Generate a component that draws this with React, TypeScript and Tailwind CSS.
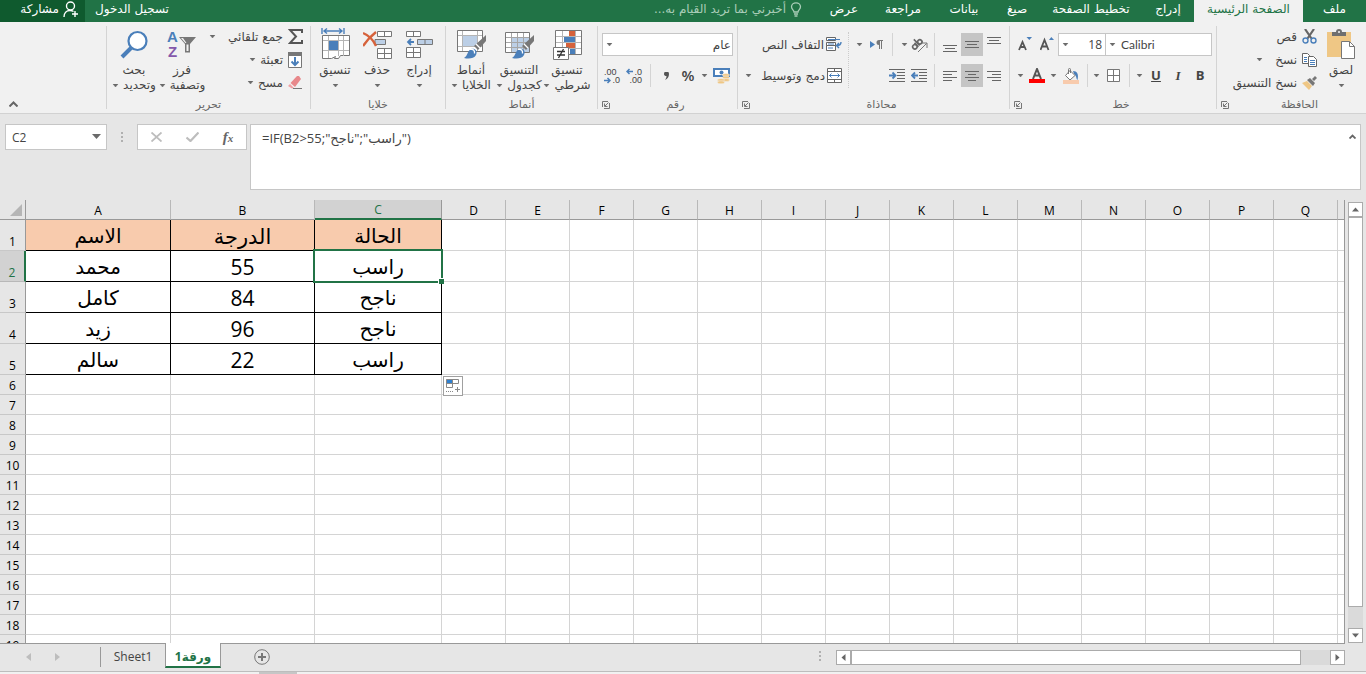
import React, { ReactNode } from 'react';
import clsx from 'clsx';

/* ---------- Small shared pieces ---------- */

const Caret = ({ className = '' }: { className?: string }) => (
  <svg width="7" height="4" viewBox="0 0 7 4" className={clsx('shrink-0', className)} fill="#6a6a6a">
    <path d="M1 0h5L3.5 3z" stroke="#6a6a6a" strokeWidth="0.5" />
  </svg>
);

const Launcher = () => (
  <button aria-label="launcher" className="flex w-4 items-center justify-center">
    <svg width="8" height="8" viewBox="0 0 8 8" fill="none" stroke="#777">
      <path d="M0.5 6V0.5H6M7.5 2v5.500H2M6.500 1.500L3 5M2.500 2.500v3H5.500" />
    </svg>
  </button>
);

const Sep = ({ className }: { className: string }) => (
  <span className={clsx('flex h-full shrink-0 justify-center', className)}>
    <span className="h-full w-px bg-[#d4d4d4]" />
  </span>
);

interface IconButtonProps {
  className: string;
  label: string;
  active?: boolean;
  children: ReactNode;
}

const IconButton = ({ className, label, active, children }: IconButtonProps) => (
  <button
    aria-label={label}
    className={clsx('flex h-full shrink-0 items-center justify-center', className, active && 'bg-[#c5c5c5]')}
  >
    {children}
  </button>
);

interface GroupProps {
  title: string;
  className: string;
  launcher?: boolean;
  children: ReactNode;
}

const Group = ({ title, className, launcher, children }: GroupProps) => (
  <section className={clsx('flex shrink-0 flex-col border-l border-[#d4d4d4]', className)}>
    <div className="flex min-h-0 flex-1 items-start">{children}</div>
    <div className="flex h-2 shrink-0 items-center">
      <span className="flex-1 text-center text-[11px] leading-4 text-[#666]">{title}</span>
      {launcher && <Launcher />}
    </div>
  </section>
);

interface BigButtonProps {
  icon: ReactNode;
  line1: string;
  line2?: string;
  className: string;
}

const BigButton = ({ icon, line1, line2, className }: BigButtonProps) => (
  <button className={clsx('flex shrink-0 flex-col items-center pt-0.5 leading-[15px]', className)}>
    <span className="flex h-8 items-center">{icon}</span>
    <span className="mt-[3px] whitespace-nowrap">{line1}</span>
    <span className="flex h-[15px] items-center gap-1 whitespace-nowrap">
      {line2}
      <Caret />
    </span>
  </button>
);

interface SmallButtonProps {
  icon: ReactNode;
  text: string;
  caret?: boolean;
  wide?: boolean;
}

const SmallButton = ({ icon, text, caret, wide }: SmallButtonProps) => (
  <button className="flex h-[23px] items-center gap-1 pb-0.5 whitespace-nowrap">
    <span className="flex w-4 justify-center">{icon}</span>
    {text}
    {caret && <Caret className={wide ? 'ms-2' : ''} />}
  </button>
);

/* ---------- Icons ---------- */

const PasteIcon = () => (
  <svg width="28" height="31" viewBox="0 0 28 31">
    <path fill="#efc785" d="M0 3h24v25H0z" />
    <path fill="#6f6f6f" d="M5 3h4a3 3 0 0 1 6 0h4v4H5z" />
    <circle cx="12" cy="3" r="1" fill="#f1f1f1" />
    <path fill="#fff" stroke="#777" d="M14.500 12.500h8l5 5v12h-13z" />
    <path fill="none" stroke="#777" d="M22.500 12.500v5h5" />
  </svg>
);

const CutIcon = () => (
  <svg width="15" height="15" viewBox="0 0 15 15" fill="none">
    <path stroke="#666" strokeWidth="2.200" d="M3 0l6.500 9.500M12 0L5.500 9.500" />
    <circle cx="3.500" cy="11.500" r="2.500" stroke="#4a7fba" strokeWidth="1.400" />
    <circle cx="11.500" cy="11.500" r="2.500" stroke="#4a7fba" strokeWidth="1.400" />
  </svg>
);

const CopyIcon = () => (
  <svg width="15" height="14" viewBox="0 0 15 14" fill="#fff" stroke="#666">
    <path d="M0.500 0.500h5l2 2v8h-7z" />
    <path stroke="#4a7fba" d="M2 4.500h3M2 6.500h3M2 8.500h3" />
    <path d="M6.500 3.500h5l3 3v7h-8z" />
    <path stroke="#4a7fba" d="M8 7.500h5M8 9.500h5M8 11.500h5" />
  </svg>
);

const PainterIcon = () => (
  <svg width="15" height="14" viewBox="0 0 15 14">
    <path fill="#efc785" d="M0 7l5-2 5 5-3 4z" />
    <path fill="#777" d="M5 4l3-2 5 5-2 3zM10 3l3-3 2 2-3 3z" />
  </svg>
);

const BordersIcon = () => (
  <svg width="13" height="13" viewBox="0 0 13 13" fill="#fff" stroke="#777">
    <path d="M0.500 0.500h12v12h-12zM6.500 0v13M0 6.500h13" />
  </svg>
);

const FillIcon = () => (
  <svg width="16" height="16" viewBox="0 0 16 16">
    <path fill="#4a7fba" d="M10 3c4 0 6 3 4.500 9C13 11 14 8 11 6z" />
    <path fill="#fff" stroke="#777" d="M7 2.500l5 5L7 12 2.500 7.500z" />
    <path fill="none" stroke="#777" d="M5.500 6V1.500a1 1 0 0 1 2 0V5" />
    <path fill="#f8cbad" d="M0 12h16v4H0z" />
  </svg>
);

// Horizontal strokes, used for both vertical and horizontal alignment
const LinesIcon = ({ d, height = 12 }: { d: string; height?: number }) => (
  <svg width="14" height={height} viewBox={`0 0 14 ${height}`} stroke="#666" fill="none">
    <path d={d} />
  </svg>
);

const VLINES = 'M0 0.500h14M2 3.500h10M0 6.500h14';

const IndentIcon = ({ flip }: { flip?: boolean }) => (
  <svg width="16" height="13" viewBox="0 0 16 13" fill="none">
    <path stroke="#666" d="M0 0.500h16M8 3.500h8M8 6.500h8M8 9.500h8M0 12.500h16" />
    {flip ? (
      <path stroke="#4a7fba" strokeWidth="1.800" d="M0 6.500h6M3.500 3.500l3 3-3 3" />
    ) : (
      <path stroke="#4a7fba" strokeWidth="1.800" d="M7 6.500H1M4 3.500l-3 3 3 3" />
    )}
  </svg>
);

const OrientationIcon = () => (
  <svg width="17" height="16" viewBox="0 0 17 16">
    <g transform="rotate(-45 6 7)" fill="none" stroke="#666" strokeWidth="1.600">
      <circle cx="2.500" cy="7.500" r="2.200" />
      <path d="M5 4.500V10M7 1.500V10" />
      <circle cx="9.500" cy="7.500" r="2.200" />
    </g>
    <path fill="none" stroke="#777" d="M7 15L15.500 6.500M11 6h5v5" />
  </svg>
);

const DirectionIcon = () => (
  <svg width="13" height="10" viewBox="0 0 13 10">
    <path fill="#4a7fba" d="M0 1l5 3.500L0 8z" />
    <path fill="#777" d="M13 0v1h-1v8h-1V1h-1v8H9V5a2.500 2.500 0 0 1 0-5z" />
  </svg>
);

const WrapIcon = () => (
  <svg width="16" height="15" viewBox="0 0 16 15" fill="#fff">
    <path stroke="#666" d="M0.500 0.500h9v3h-9zM0.500 5.500h9v3h-9zM0.500 8.500h9v5h-9z" />
    <path stroke="#4a7fba" fill="none" d="M2 2.500h12M2 7h6M2 11h5" />
    <path stroke="#4a7fba" strokeWidth="1.400" fill="none" d="M15 5c0 3-2 3.500-4 3.500M13 6l-2.500 2.500L13 11" />
  </svg>
);

const MergeIcon = () => (
  <svg width="15" height="15" viewBox="0 0 15 15" fill="#fff" stroke="#666">
    <path d="M0.500 0.500h14v14h-14zM0 3.500h15M0 11.500h15M7.500 0v3M7.500 12v3" />
    <path stroke="#4a7fba" fill="none" d="M2 7.500h11M4.500 5.500l-2 2 2 2M10.500 5.500l2 2-2 2" />
  </svg>
);

const MoneyIcon = () => (
  <svg width="17" height="17" viewBox="0 0 17 17">
    <path fill="#fff" stroke="#4a7fba" strokeWidth="2" d="M1 2h15v7H1z" />
    <circle cx="8.500" cy="5.500" r="2" fill="#4a7fba" />
    <g fill="#efc785" stroke="#f1f1f1" strokeWidth="0.500">
      <ellipse cx="13" cy="8" rx="3.500" ry="1.500" />
      <ellipse cx="13" cy="10.500" rx="3.500" ry="1.500" />
      <ellipse cx="13" cy="13" rx="3.500" ry="1.500" />
      <ellipse cx="8" cy="13" rx="3.500" ry="1.500" />
      <ellipse cx="8" cy="15.300" rx="3.500" ry="1.500" />
    </g>
  </svg>
);

const DecimalIcon = ({ less }: { less?: boolean }) => (
  <span dir="ltr" className="relative flex w-4 flex-col font-['Liberation_Sans'] text-[9px] leading-[8px] text-[#444]">
    <span className={less ? 'text-left' : 'text-right'}>{less ? '.00' : '.0'}</span>
    <span className="text-right">{less ? '.0' : '.00'}</span>
    <svg width="7" height="7" viewBox="0 0 7 7" fill="none" stroke="#4a7fba" strokeWidth="1.500" className={clsx('absolute left-0', less ? 'bottom-0' : 'top-0')}>
      <path d={less ? 'M0 3.500h6M3.500 1l2.500 2.500L3.500 6' : 'M7 3.500H1M3.500 1L1 3.500 3.500 6'} />
    </svg>
  </span>
);

const ConditionalIcon = () => (
  <svg width="31" height="31" viewBox="0 0 31 31">
    <path fill="#fff" stroke="#777" d="M3.500 1.500h26v24h-26z" />
    <path stroke="#b5b5b5" d="M10.500 2v23M23.500 2v23M4 7.500h25M4 13.500h25M4 19.500h25" />
    <path fill="#d6623b" d="M17 2h6v5h-6zM14 14h9v5h-9z" />
    <path fill="#4a7fba" d="M12 8h11v5H12zM18 20h5v5h-5z" />
    <path fill="#fff" stroke="#777" d="M1.500 18.500h15v12h-15z" />
    <path fill="none" stroke="#333" strokeWidth="1.300" d="M5 22.500h8M5 26h8M11.500 20l-5 9" />
  </svg>
);

const Brush = () => (
  <>
    <path fill="#777" d="M30 6v6l-8 9-4-4z" />
    <path fill="#4a7fba" d="M8 29c4-2 3-7 7-9 4-1 7 2 5 6-2 4-8 4-12 3z" />
    <path fill="none" stroke="#fff" strokeWidth="1.300" d="M14 20.500c3-1 5 1 4.500 4M20 15l4 4" />
  </>
);

const TableFormatIcon = () => (
  <svg width="31" height="31" viewBox="0 0 31 31">
    <path fill="#fff" stroke="#777" d="M1.500 3.500h24v20h-24z" />
    <path fill="#bccfe6" d="M8 9h17v14H8z" />
    <path stroke="#a5a5a5" d="M7.500 4v19M13.500 4v19M19.500 4v19M2 8.500h23M2 13.500h23M2 18.500h23" />
    <Brush />
  </svg>
);

const CellStylesIcon = () => (
  <svg width="31" height="31" viewBox="0 0 31 31">
    <path fill="#fff" stroke="#777" d="M1.500 1.500h25v21h-25z" />
    <path stroke="#b5b5b5" d="M6.500 2v20M21.500 2v20M2 6.500h24M2 17.500h24" />
    <path fill="#bccfe6" d="M7 7h14v10H7z" />
    <Brush />
  </svg>
);

const InsertIcon = () => (
  <svg width="27" height="29" viewBox="0 0 27 29" fill="#fff" stroke="#777">
    <path d="M0.500 1.500h14v5h-14zM7.500 1.500v5M0.500 17.500h14v10h-14zM7.500 17.500v10M0.500 22.500h14" />
    <path fill="#bccfe6" d="M11.500 9.500h15v5h-15zM19 9.500v5" />
    <path fill="none" stroke="#4a7fba" strokeWidth="1.800" d="M8 12H2M5 9l-3 3 3 3" />
  </svg>
);

const DeleteIcon = () => (
  <svg width="29" height="29" viewBox="0 0 29 29" fill="#fff" stroke="#777">
    <path d="M14.500 1.500h14v5h-14zM21.500 1.500v5M14.500 18.500h14v10h-14zM21.500 18.500v10M14.500 23.500h14" />
    <path fill="#bccfe6" d="M12 9.500h10.500v5H12z" />
    <path fill="none" stroke="#d6623b" strokeWidth="2.400" d="M0 3c5 2 10 6 13 13M13 2C8 6 4 10 0 16" />
  </svg>
);

const FormatIcon = () => (
  <svg width="29" height="32" viewBox="0 0 29 32">
    <path fill="none" stroke="#4a7fba" strokeWidth="1.400" d="M1 0v6M23 0v6M3 3h18M6 0.500L3 3l3 2.500M18 0.500L21 3l-3 2.500" />
    <path fill="#fff" stroke="#777" d="M1.500 7.500h27v20l-9 0-2 3h-4l1-2-4 2h-9z" />
    <path stroke="#b5b5b5" fill="none" d="M7.500 8v22M17.500 8v20M22.500 8v20M2 12.500h26M2 22.500h26" />
    <path fill="#4a7fba" d="M8 13h9v9H8z" />
  </svg>
);

const SigmaIcon = () => (
  <svg width="15" height="15" viewBox="0 0 15 15" fill="none" stroke="#555" strokeWidth="2">
    <path d="M14 4V1H2l6 6.500L2 14h12v-3" />
  </svg>
);

const FillDownIcon = () => (
  <svg width="14" height="16" viewBox="0 0 14 16">
    <path fill="#fff" stroke="#777" d="M0.500 0.500h13v15h-13z" />
    <path fill="#777" d="M0 0h14v4H0z" />
    <path fill="none" stroke="#4a7fba" strokeWidth="2" d="M7 5v8M3.500 9.500L7 13l3.500-3.500" />
  </svg>
);

const EraserIcon = () => (
  <svg width="14" height="13" viewBox="0 0 14 13">
    <path fill="#e8888b" d="M9 0h2l2 3-6 8-4.500-4z" />
    <path fill="#f0a0a3" d="M2 8l4 4-2 .5L0 10z" />
    <path stroke="#777" d="M5 12.500h9" />
  </svg>
);

const SortIcon = () => (
  <span dir="ltr" className="flex h-[30px] w-[30px] items-start gap-px">
    <span className="flex w-[11px] flex-col text-center font-['Liberation_Sans'] text-[15px] leading-[15px] font-bold">
      <span className="text-[#4a7fba]">A</span>
      <span className="text-[#8458ab]">Z</span>
    </span>
    <svg width="17" height="16" viewBox="0 0 17 16" className="mt-2">
      <path fill="#777" d="M0 0h17l-6 7v8.500H6V7z" />
      <path fill="#f1f1f1" d="M7.500 7.500h2v6.500h-2zM2 1h2l3.500 5H6.300z" />
    </svg>
  </span>
);

const FindIcon = () => (
  <svg width="29" height="29" viewBox="0 0 29 29">
    <circle cx="17.500" cy="11" r="9" fill="#fff" stroke="#4a7fba" strokeWidth="2.200" />
    <path stroke="#4a7fba" strokeWidth="4" d="M11 18L2 27" />
  </svg>
);

/* ---------- Tabs ---------- */

const TABS = [
  { name: 'ملف', width: 'w-[63px]' },
  { name: 'الصفحة الرئيسية', width: 'w-[109px]', active: true },
  { name: 'إدراج', width: 'w-[52px]' },
  { name: 'تخطيط الصفحة', width: 'w-[102px]' },
  { name: 'صيغ', width: 'w-[46px]' },
  { name: 'بيانات', width: 'w-[60px]' },
  { name: 'مراجعة', width: 'w-[62px]' },
  { name: 'عرض', width: 'w-[56px]' },
];

const TabBar = () => (
  <header dir="rtl" className="flex h-[22px] shrink-0 bg-[#217346] text-[12px] leading-[18px] text-white">
    <nav className="flex">
      {TABS.map((t) => (
        <button
          key={t.name}
          className={clsx('shrink-0 pb-1 whitespace-nowrap', t.width, t.active && 'bg-[#f1f1f1] text-[#217346]')}
        >
          {t.name}
        </button>
      ))}
    </nav>
    <button className="ms-3.5 flex items-center gap-1 pb-1 text-[#a9cdb8]">
      <svg width="12" height="15" viewBox="0 0 12 15" fill="none" stroke="#a9cdb8" strokeWidth="1.300">
        <path d="M4 10C4 8 1.500 7.500 1.500 4.800a4.500 4 0 0 1 9 0C10.500 7.500 8 8 8 10zM4 12h4M4.500 14h3" />
      </svg>
      أخبرني بما تريد القيام به...
    </button>
    <button className="ms-auto px-2.5 pb-1">تسجيل الدخول</button>
    <button className="flex w-[85px] items-center gap-1 bg-[#0f5a2e] ps-1.5 pb-1">
      <svg width="16" height="17" viewBox="0 0 16 17" fill="none" stroke="#fff" strokeWidth="1.400">
        <circle cx="7.500" cy="5" r="4" />
        <path d="M1 16c0-4 2.500-6.500 6-6.500 1.500 0 2.500.3 3.500 1M12 10v6M9 13h6" />
      </svg>
      مشاركة
    </button>
  </header>
);

/* ---------- Ribbon ---------- */

const Ribbon = () => (
  <div dir="rtl" className="flex h-[92px] shrink-0 border-b border-[#d2d2d2] bg-[#f1f1f1] pt-1 pb-1 text-[12px] text-[#444]">
    <Group title="الحافظة" className="w-[150px]" launcher>
      <BigButton icon={<PasteIcon />} line1="لصق" className="ms-1 w-[42px]" />
      <div className="ms-[3px] flex flex-col">
        <SmallButton icon={<CutIcon />} text="قص" />
        <SmallButton icon={<CopyIcon />} text="نسخ" caret wide />
        <SmallButton icon={<PainterIcon />} text="نسخ التنسيق" />
      </div>
    </Group>

    <Group title="خط" className="w-[207px]" launcher>
      <div className="flex flex-col gap-2 ps-1 pt-[7px]">
        <div className="flex h-[23px]">
          <div className="relative w-[107px]">
            <select aria-label="Font" dir="ltr" className="h-full w-full appearance-none border border-[#c6c6c6] bg-white ps-[15px] font-[Lato]">
              <option>Calibri</option>
            </select>
            <Caret className="pointer-events-none absolute top-[10px] left-1" />
          </div>
          <div className="relative w-[47px]">
            <select aria-label="Size" dir="rtl" className="h-full w-full appearance-none border border-r-0 border-[#c6c6c6] bg-white ps-[3px] font-['Open_Sans']">
              <option>18</option>
            </select>
            <Caret className="pointer-events-none absolute top-[10px] left-1" />
          </div>
          <IconButton label="Grow" className="w-[22px]">
            <svg width="14" height="15" viewBox="0 0 14 15">
              <path fill="none" stroke="#555" strokeWidth="1.800" d="M0.500 13L4.500 3l4 10M2 9.500h5" />
              <path fill="#4a7fba" d="M9 3l2.300-3L14 3z" />
            </svg>
          </IconButton>
          <IconButton label="Shrink" className="w-[22px]">
            <svg width="14" height="15" viewBox="0 0 14 15">
              <path fill="none" stroke="#555" strokeWidth="1.800" d="M1 13l3.500-8L8 13M2.500 10h4" />
              <path fill="#4a7fba" d="M8.500 0h5.500l-2.700 3z" />
            </svg>
          </IconButton>
        </div>
        <div className="flex h-[23px] pr-px font-['Open_Sans'] text-[13px]">
          <IconButton label="Bold" className="w-[22px] font-bold">B</IconButton>
          <IconButton label="Italic" className="w-[22px] font-['Liberation_Serif'] font-bold italic">I</IconButton>
          <IconButton label="Underline" className="w-[22px] font-bold underline">U</IconButton>
          <IconButton label="Underline style" className="w-[12px]"><Caret /></IconButton>
          <Sep className="w-2" />
          <IconButton label="Borders" className="w-6"><BordersIcon /></IconButton>
          <IconButton label="Border style" className="w-[10px]"><Caret /></IconButton>
          <Sep className="w-2" />
          <IconButton label="Fill" className="w-6"><FillIcon /></IconButton>
          <IconButton label="Fill colour" className="w-[12px]"><Caret /></IconButton>
          <IconButton label="Font colour" className="w-5">
            <svg width="16" height="15" viewBox="0 0 16 15">
              <path fill="none" stroke="#555" strokeWidth="2" d="M4 11L8 1l4 10M5.500 7.500h5" />
              <path fill="#f00" d="M0 11h16v4H0z" />
            </svg>
          </IconButton>
          <IconButton label="Font colours" className="w-[14px]"><Caret /></IconButton>
        </div>
      </div>
    </Group>

    <Group title="محاذاة" className="w-[272px]" launcher>
      <div className="flex w-[160px] shrink-0 flex-col gap-2 ps-1 pt-[7px]">
        <div className="flex h-[23px]">
          <IconButton label="Top" className="w-[22px] pb-2"><LinesIcon height={7} d={VLINES} /></IconButton>
          <IconButton label="Middle" active className="w-[22px]"><LinesIcon height={7} d={VLINES} /></IconButton>
          <IconButton label="Bottom" className="w-[22px] pt-2"><LinesIcon height={7} d={VLINES} /></IconButton>
          <Sep className="w-[9px]" />
          <IconButton label="Orientation" className="w-[22px]"><OrientationIcon /></IconButton>
          <IconButton label="Orientation menu" className="w-2"><Caret /></IconButton>
          <Sep className="w-4" />
          <IconButton label="Direction" className="w-4"><DirectionIcon /></IconButton>
          <IconButton label="Direction menu" className="w-[18px]"><Caret /></IconButton>
        </div>
        <div className="flex h-[23px]">
          <IconButton label="Right" className="w-[22px]"><LinesIcon d="M0 1.500h14M5 4.500h9M0 7.500h14M5 10.500h9" /></IconButton>
          <IconButton label="Center" active className="w-[22px]"><LinesIcon d="M0 1.500h14M3 4.500h8M0 7.500h14M3 10.500h8" /></IconButton>
          <IconButton label="Left" className="w-[22px]"><LinesIcon d="M0 1.500h14M0 4.500h9M0 7.500h14M0 10.500h9" /></IconButton>
          <Sep className="w-[9px]" />
          <IconButton label="Outdent" className="w-[22px]"><IndentIcon /></IconButton>
          <IconButton label="Indent" className="w-[22px]"><IndentIcon flip /></IconButton>
        </div>
      </div>
      <div className="mt-[6px] flex h-[56px] flex-1 flex-col gap-2 border-r border-dotted border-[#ccc] ps-[6px] pt-px">
        <button className="flex h-[23px] items-center gap-0.5 whitespace-nowrap"><WrapIcon />التفاف النص</button>
        <button className="flex h-[23px] items-center gap-0.5 whitespace-nowrap">
          <MergeIcon />دمج وتوسيط<Caret className="ms-auto me-[7px]" />
        </button>
      </div>
    </Group>

    <Group title="رقم" className="w-[140px]" launcher>
      <div className="flex flex-col gap-2 ps-1 pt-[7px]">
        <div className="relative h-[23px] w-[131px]">
          <select aria-label="Number format" className="h-full w-full appearance-none border border-[#c6c6c6] bg-white ps-px">
            <option>عام</option>
          </select>
          <Caret className="pointer-events-none absolute top-[10px] left-1" />
        </div>
        <div className="flex h-[23px]">
          <IconButton label="Currency" className="w-6"><MoneyIcon /></IconButton>
          <IconButton label="Currency menu" className="w-[10px]"><Caret /></IconButton>
          <IconButton label="Percent" className="w-[22px] font-['Open_Sans'] text-[15px] font-semibold">%</IconButton>
          <IconButton label="Comma" className="w-[22px]">
            <svg width="5" height="8" viewBox="0 0 5 8" fill="#555"><path d="M0 2a2.300 2.300 0 0 1 5 0c0 3-1.500 5-4 6 1-1.500 1.500-2.500 1.500-4C1 4 0 3.500 0 2z" /></svg>
          </IconButton>
          <Sep className="w-[10px]" />
          <IconButton label="More decimals" className="w-[22px]"><DecimalIcon /></IconButton>
          <IconButton label="Fewer decimals" className="w-[22px]"><DecimalIcon less /></IconButton>
        </div>
      </div>
    </Group>

    <Group title="أنماط" className="w-[152px]">
      <div className="flex ps-1.5">
        <BigButton icon={<ConditionalIcon />} line1="تنسيق" line2="شرطي" className="w-12" />
        <BigButton icon={<TableFormatIcon />} line1="التنسيق" line2="كجدول" className="w-12" />
        <BigButton icon={<CellStylesIcon />} line1="أنماط" line2="الخلايا" className="w-12" />
      </div>
    </Group>

    <Group title="خلايا" className="w-[135px]">
      <div className="flex ps-[5px]">
        <BigButton icon={<InsertIcon />} line1="إدراج" className="w-[42px]" />
        <BigButton icon={<DeleteIcon />} line1="حذف" className="w-[42px]" />
        <BigButton icon={<FormatIcon />} line1="تنسيق" className="w-[42px]" />
      </div>
    </Group>

    <Group title="تحرير" className="w-[204px]">
      <div className="flex w-[104px] shrink-0 flex-col ps-[7px]">
        <SmallButton icon={<SigmaIcon />} text="جمع تلقائي" caret wide />
        <SmallButton icon={<FillDownIcon />} text="تعبئة" caret />
        <SmallButton icon={<EraserIcon />} text="مسح" caret />
      </div>
      <BigButton icon={<SortIcon />} line1="فرز" line2="وتصفية" className="w-12" />
      <BigButton icon={<FindIcon />} line1="بحث" line2="وتحديد" className="w-12" />
    </Group>

    <button aria-label="Collapse ribbon" className="ms-auto me-[7px] self-end p-0.5">
      <svg width="9" height="6" viewBox="0 0 9 6" fill="none" stroke="#666" strokeWidth="2">
        <path d="M0.500 5.500l4-4 4 4" />
      </svg>
    </button>
  </div>
);

/* ---------- Formula bar ---------- */

const Dots = () => (
  <svg width="3" height="11" viewBox="0 0 3 11" fill="#b0b0b0">
    <path d="M0 0h2v2H0zM0 4h2v2H0zM0 8h2v2H0z" />
  </svg>
);

const FormulaBar = () => (
  <div className="flex h-[86px] shrink-0 items-start bg-[#e6e6e6] pt-[10px] pr-[5px] pl-[5px] text-[#444]">
    <div className="relative h-[26px] w-[102px]">
      <input
        aria-label="Name box"
        defaultValue="C2"
        className="h-full w-full border border-[#c6c6c6] bg-white ps-[6px] font-['Open_Sans'] text-[12px]"
      />
      <svg width="9" height="5" viewBox="0 0 9 5" fill="#6a6a6a" className="absolute top-[10px] right-[6px]">
        <path d="M0 0h9L4.500 5z" />
      </svg>
    </div>
    <div className="flex h-[26px] w-[30px] items-center justify-center"><Dots /></div>
    <div className="flex h-[26px] w-[110px] items-center border border-[#c6c6c6] bg-white">
      <button aria-label="Cancel" className="flex w-9 justify-center">
        <svg width="11" height="10" viewBox="0 0 11 10" stroke="#bdbdbd" strokeWidth="1.800"><path d="M.5.5l10 9M10.500.5l-10 9" /></svg>
      </button>
      <button aria-label="Enter" className="flex w-9 justify-center">
        <svg width="13" height="10" viewBox="0 0 13 10" fill="none" stroke="#bdbdbd" strokeWidth="2.200"><path d="M.5 5.500L4.500 9l8-8.500" /></svg>
      </button>
      <button aria-label="Insert function" className="w-9 font-['Liberation_Serif'] text-[15px] leading-[18px] font-bold text-[#666] italic">
        f<span className="text-[11px]">x</span>
      </button>
    </div>
    <div className="relative ms-[3px] h-[66px] flex-1">
      {/* the marks keep each quoted word in its own argument slot */}
      <textarea
        aria-label="Formula"
        dir="ltr"
        className="block h-full w-full resize-none border border-[#c6c6c6] bg-white px-[11px] pt-1 font-['Open_Sans','DejaVu_Sans',sans-serif] text-[13px] leading-[18px]"
        defaultValue={'=IF(B2>55;"ناجح"\u200e;"راسب"\u200e)'}
      />
      <svg width="7" height="5" viewBox="0 0 7 5" fill="none" stroke="#666" strokeWidth="1.800" className="absolute top-[10px] right-[5px]">
        <path d="M.5 4.500l3-3 3 3" />
      </svg>
    </div>
  </div>
);

/* ---------- Sheet ---------- */

const COLUMNS = ['A', 'B', 'C', 'D', 'E', 'F', 'G', 'H', 'I', 'J', 'K', 'L', 'M', 'N', 'O', 'P', 'Q'];
const WIDTHS = ['w-[145px]', 'w-[144px]', 'w-[127px]'];
const ROWS = Array.from({ length: 19 }, (_, i) => i + 1);
const DATA = [
  ['الاسم', 'الدرجة', 'الحالة'],
  ['محمد', '55', 'راسب'],
  ['كامل', '84', 'ناجح'],
  ['زيد', '96', 'ناجح'],
  ['سالم', '22', 'راسب'],
];

const PasteOptions = () => (
  <button aria-label="Fill options" className="absolute top-px left-px z-10 flex h-5 w-5 items-center justify-center border border-[#a0a0a0] bg-white">
    <svg width="14" height="14" viewBox="0 0 14 14" fill="none" stroke="#888">
      <path d="M.5.500h12v4H.5zM6.500.500v8h-6v-8" />
      <path fill="#2f80d0" stroke="none" d="M1 1h5v3H1z" />
      <path strokeDasharray="1 1" d="M0 12.500h7" />
      <path d="M11.500 8v5M9 10.500h5" />
    </svg>
  </button>
);

const Sheet = () => (
  <div className="min-w-0 flex-1 overflow-hidden border-r border-[#999] bg-white">
    <table className="w-full table-fixed border-separate border-spacing-0 font-['Open_Sans','DejaVu_Sans',sans-serif] text-black">
      <colgroup>
        <col className="w-[26px]" />
        {COLUMNS.map((c, i) => <col key={c} className={WIDTHS[i] || 'w-[64px]'} />)}
        <col />
      </colgroup>
      <thead>
        <tr className="h-5 bg-[#e6e6e6] text-[12px] leading-[17px]">
          <th className="border-r border-b border-[#999] p-0">
            <svg width="12" height="12" viewBox="0 0 12 12" fill="#b5b5b5" className="ms-auto me-[3px]"><path d="M12 0v12H0z" /></svg>
          </th>
          {COLUMNS.map((c) => (
            <th
              key={c}
              className={clsx(
                'border-r p-0 font-normal',
                c === 'C' ? 'border-b-2 border-r-[#999] border-b-[#217346] bg-[#d2d2d2] pt-px text-[#217346]' : 'border-b border-r-[#b8b8b8] border-b-[#999] pt-0.5',
              )}
            >
              {c}
            </th>
          ))}
          <th className="border-b border-[#999] p-0" />
        </tr>
      </thead>
      <tbody>
        {ROWS.map((r) => {
          const tall = r <= DATA.length;
          return (
            <tr key={r} className={tall ? 'h-[31px]' : 'h-5'}>
              <th
                className={clsx(
                  'border-b p-0 align-bottom text-[12px] leading-[17px] font-normal',
                  r === 2 ? 'border-r-2 border-r-[#217346] border-b-[#b8b8b8] bg-[#d2d2d2] text-[#217346]' : 'border-r border-r-[#999] border-b-[#c8c8c8] bg-[#e6e6e6]',
                )}
              >
                {r}
              </th>
              {COLUMNS.map((c, i) => {
                const filled = tall && i < 3;
                return (
                  <td
                    key={c}
                    className={clsx(
                      'relative border-r border-b p-0 text-center',
                      filled ? 'border-black' : 'border-[#d4d4d4]',
                      filled && 'pt-0.5 leading-7',
                      filled && r === 1 && 'bg-[#f8cbad]',
                      i === 1 ? 'text-[21px]' : 'text-[20px]',
                    )}
                  >
                    {filled && DATA[r - 1][i]}
                    {c === 'C' && r === 2 && (
                      <span className="pointer-events-none absolute -top-[2px] -right-[2px] -bottom-[2px] -left-[2px] z-10 border-2 border-[#217346]">
                        <span className="absolute -right-[3px] -bottom-[3px] h-[6px] w-[6px] border-t border-l border-white bg-[#217346]" />
                      </span>
                    )}
                    {c === 'D' && r === 6 && <PasteOptions />}
                  </td>
                );
              })}
              <td className="border-b border-[#d4d4d4] p-0" />
            </tr>
          );
        })}
      </tbody>
    </table>
  </div>
);

const ScrollButton = ({ d, label, className }: { d: string; label: string; className: string }) => (
  <button aria-label={label} className={clsx('flex shrink-0 items-center justify-center border border-[#ababab] bg-white', className)}>
    <svg width="7" height="7" viewBox="0 0 7 7" fill="#666"><path d={d} /></svg>
  </button>
);

const VerticalScroll = () => (
  <div className="flex w-[21px] shrink-0 flex-col items-center bg-[#e6e6e6] pt-[2px]">
    <ScrollButton label="Up" d="M0 5.500h7l-3.500-4z" className="h-[15px] w-[15px]" />
    <div className="flex w-[15px] flex-1 flex-col bg-[#dadada]">
      <div className="h-[95%] border border-[#ababab] bg-white" />
    </div>
    <ScrollButton label="Down" d="M0 1.500h7l-3.500 4z" className="h-[15px] w-[15px]" />
  </div>
);

/* ---------- Sheet tabs ---------- */

const SheetTabs = () => (
  <footer className="flex h-[29px] shrink-0 items-start border-b border-[#bdbdbd] bg-[#e6e6e6] font-['Open_Sans','DejaVu_Sans',sans-serif] text-[12px] text-[#444]">
    <div className="flex h-[26px] w-[100px] items-center gap-6 border-t border-[#999] ps-[26px]">
      <svg width="5" height="8" viewBox="0 0 5 8" fill="#bdbdbd"><path d="M5 0v8L0 4z" /></svg>
      <svg width="5" height="8" viewBox="0 0 5 8" fill="#bdbdbd"><path d="M0 0v8l5-4z" /></svg>
    </div>
    <div className="flex h-[26px] border-t border-[#999] pt-[3px]">
      <button className="h-5 w-[65px] border-l border-[#999] leading-5">Sheet1</button>
    </div>
    <button dir="rtl" className="h-[25px] w-[56px] border-x border-b-2 border-x-[#999] border-b-[#217346] bg-white pt-1 leading-[18px] font-bold text-[#217346]">
      ورقة1
    </button>
    <div className="flex h-[26px] flex-1 items-center border-t border-[#999] ps-[33px]">
      <button aria-label="New sheet">
        <svg width="16" height="16" viewBox="0 0 16 16" fill="none" stroke="#777">
          <circle cx="8" cy="8" r="7.300" />
          <path strokeWidth="2" d="M8 4v8M4 8h8" />
        </svg>
      </button>
      <span className="ms-auto"><Dots /></span>
    </div>
    <div className="flex h-[28px] w-[523px] border-t border-[#999] ps-[14px] pt-[6px]">
      <ScrollButton label="Scroll left" d="M5.500 0v7l-4-3.500z" className="h-[15px] w-[15px]" />
      <div className="flex h-[15px] flex-1 bg-[#dadada]">
        <div className="w-[94%] border border-[#ababab] bg-white" />
      </div>
      <ScrollButton label="Scroll right" d="M1.500 0v7l4-3.500z" className="h-[15px] w-[15px]" />
    </div>
    <div className="w-[21px]" />
  </footer>
);

export default function App() {
  return (
    <div className="flex h-screen flex-col overflow-hidden bg-[#e6e6e6] font-['DejaVu_Sans',sans-serif]">
      <TabBar />
      <Ribbon />
      <FormulaBar />
      <main className="flex min-h-0 flex-1">
        <Sheet />
        <VerticalScroll />
      </main>
      <SheetTabs />
      <div className="h-[2px] shrink-0 bg-[#f1f1f1] ps-[259px]">
        <div className="h-[2px] w-[38px] bg-[#c6c6c6]" />
      </div>
    </div>
  );
}
